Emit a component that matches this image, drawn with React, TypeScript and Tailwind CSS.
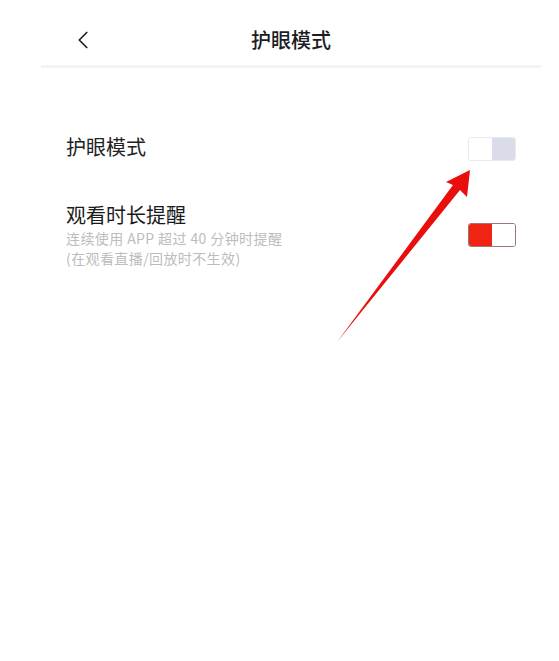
import { ChevronLeft } from 'lucide-react'

const font = { fontFamily: '"Noto Sans CJK SC", "Noto Sans", sans-serif' }

const Toggle = ({ on }: { on: boolean }) => {
	if (on) {
		return (
			<div className="flex w-[48px] h-[24px] rounded-[3px] border border-[#9b7676] overflow-hidden">
				<div className="w-1/2 h-full bg-[#ef2412]" />
				<div className="w-1/2 h-full bg-white" />
			</div>
		)
	}
	return (
		<div className="flex w-[48px] h-[24px] rounded-[3px] border border-[#e9e9ef] overflow-hidden">
			<div className="w-1/2 h-full bg-white" />
			<div className="w-1/2 h-full bg-[#dbdce9]" />
		</div>
	)
}

export default function App() {
	return (
		<div className="relative w-[559px] h-[661px] bg-white overflow-hidden" style={font}>
			<div className="ml-[41px] w-[500px]">
				{/* header */}
				<div className="relative h-[65px] pt-[28px] flex justify-center">
					<ChevronLeft className="absolute left-[27px] top-[25px] w-[30px] h-[30px] text-[#222]" strokeWidth={1.4} />
					<span className="text-[20px] leading-[24px] font-medium text-[#1c1c24]">护眼模式</span>
				</div>
				<div className="h-[3px] bg-[#f3f3f3]" />

				{/* eye mode */}
				<div className="mt-[65px] px-[25px] flex items-center justify-between">
					<span className="text-[20px] leading-[28px] text-[#222]">护眼模式</span>
					<div className="mt-[4px]">
						<Toggle on={false} />
					</div>
				</div>

				{/* watch time reminder */}
				<div className="mt-[41px] px-[25px] flex items-center justify-between">
					<div className="flex flex-col">
						<span className="text-[20px] leading-[26px] text-[#1a1a1a]">观看时长提醒</span>
						<span className="text-[14px] leading-[20px] tracking-[0.4px] text-[#bcbcbc]">连续使用 APP 超过 40 分钟时提醒</span>
						<span className="text-[14px] leading-[20px] tracking-[0.4px] text-[#bcbcbc]">(在观看直播/回放时不生效)</span>
					</div>
					<Toggle on />
				</div>
			</div>

			{/* annotation arrow */}
			<svg className="absolute left-0 top-0 pointer-events-none" width="559" height="661" viewBox="0 0 559 661">
				<polygon points="470,170 467,197 460,190 337,342 453,185 446,182" fill="#e90d0d" />
			</svg>
		</div>
	)
}
